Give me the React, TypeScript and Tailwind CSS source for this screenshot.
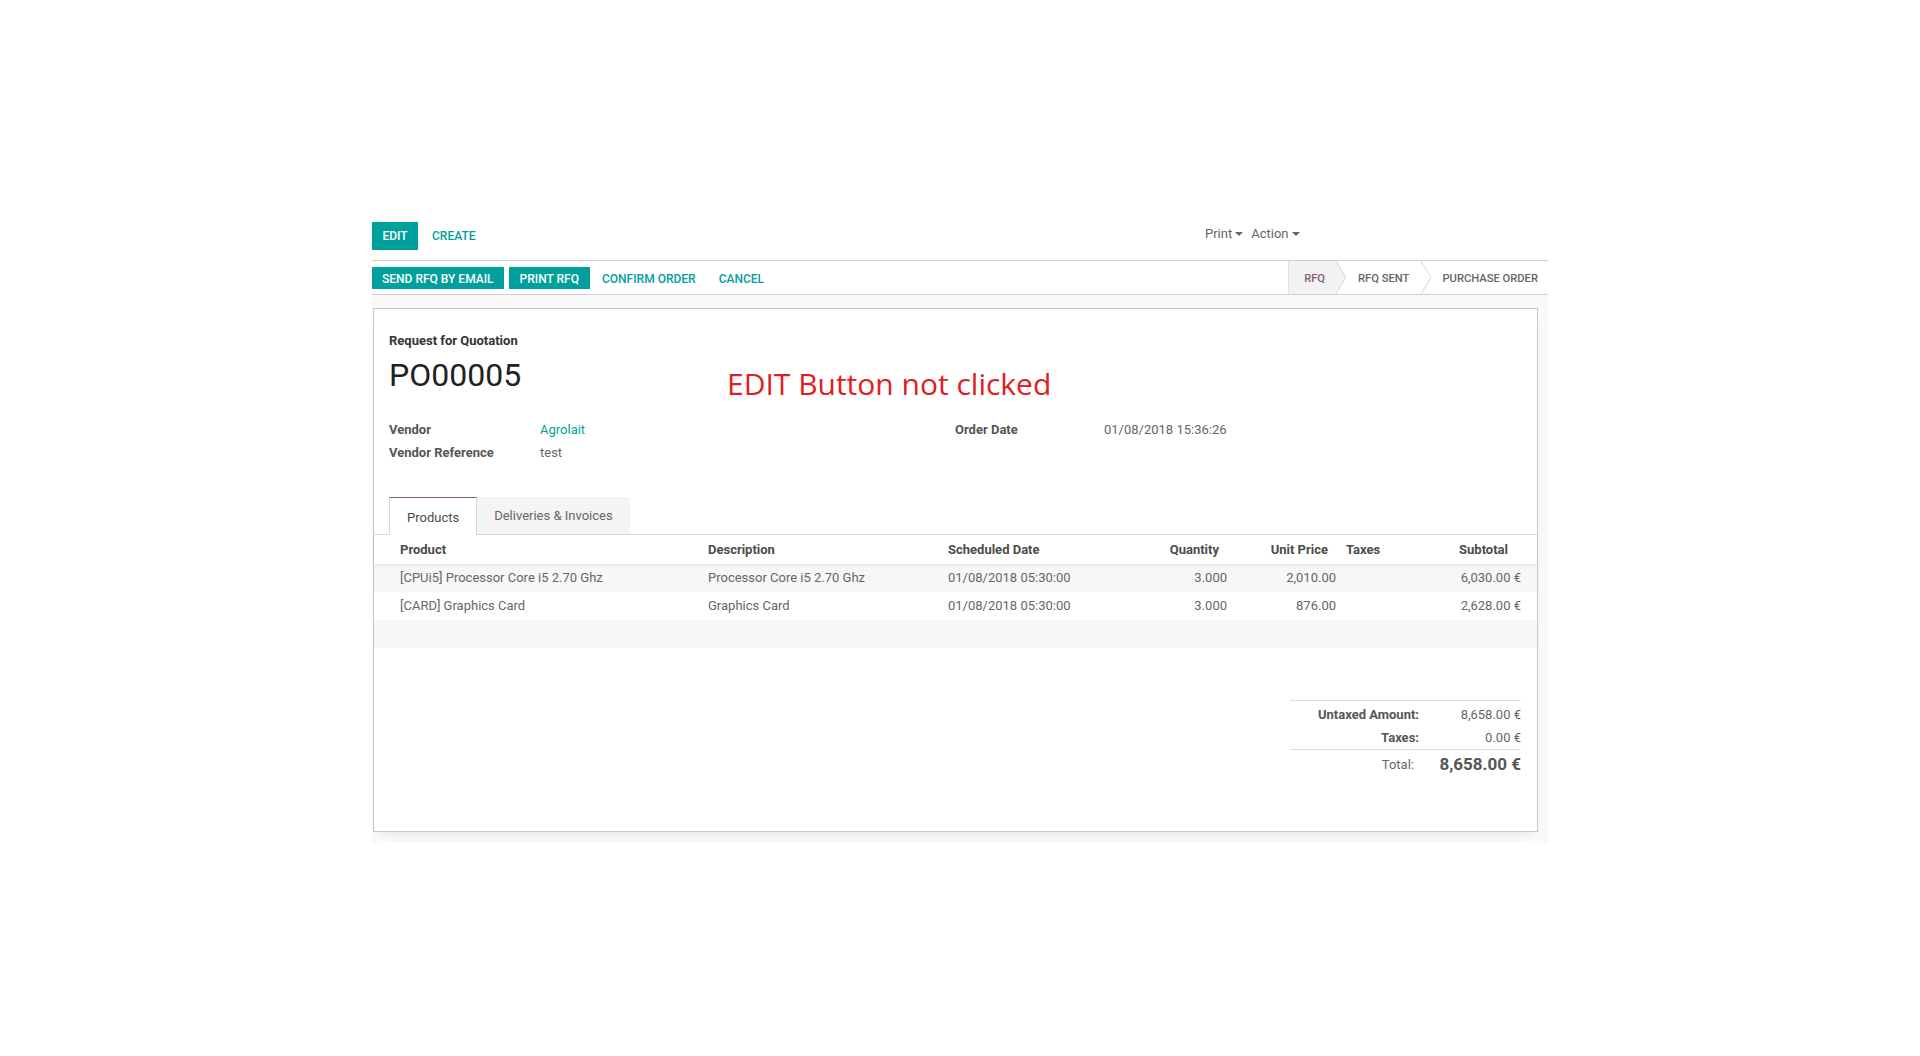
import React from "react";

function Caret() {
  return <span className="ml-[3px] inline-block h-0 w-0 border-x-[4px] border-t-[4px] border-x-transparent border-t-[#666]" />;
}

function Chevron({ fill }: { fill?: boolean }) {
  return (
    <svg width="10" height="33" viewBox="0 0 10 33" className="block shrink-0">
      {fill && <polygon points="0,0 0,33 10,16.5" fill="#f2f2f2" />}
      <polyline points="0,0 10,16.5 0,33" fill="none" stroke="#d6d6d6" strokeWidth="1" />
    </svg>
  );
}

const rows = [
  {
    product: "[CPUi5] Processor Core i5 2.70 Ghz",
    desc: "Processor Core i5 2.70 Ghz",
    date: "01/08/2018 05:30:00",
    qty: "3.000",
    price: "2,010.00",
    sub: "6,030.00 €",
  },
  {
    product: "[CARD] Graphics Card",
    desc: "Graphics Card",
    date: "01/08/2018 05:30:00",
    qty: "3.000",
    price: "876.00",
    sub: "2,628.00 €",
  },
];

const gridCols = "grid grid-cols-[334px_240px_152px_127px_109px_64px_121px_16px]";

export default function App() {
  return (
    <div className="min-h-[1056px] w-[1920px] bg-white font-['Roboto',sans-serif] text-[13px] text-[#4c4c4c]">
      <div className="w-[1548px] pl-[372px] pt-[222px]">
        {/* top row */}
        <div className="flex h-[28px] items-center">
          <div className="flex w-[588px] items-center">
            <button className="h-[28px] w-[46px] bg-[#00A09D] text-[12px] font-medium text-white">EDIT</button>
            <span className="ml-[14px] text-[12px] font-medium text-[#00A09D]">CREATE</span>
          </div>
          <div className="-mt-[4px] flex items-center pl-[245px] text-[13px] text-[#666]">
            <span className="flex items-center">Print<Caret /></span>
            <span className="ml-[8px] flex items-center">Action<Caret /></span>
          </div>
        </div>

        {/* status bar row */}
        <div className="mt-[10px] flex h-[35px] items-center justify-between border-y border-[#d0d0d0]">
          <div className="flex items-center text-[12px] font-medium">
            <button className="h-[22px] bg-[#00A09D] px-[10px] pt-[2px] text-white">SEND RFQ BY EMAIL</button>
            <button className="ml-[5px] h-[22px] bg-[#00A09D] px-[11px] pt-[2px] text-white">PRINT RFQ</button>
            <button className="ml-[2px] h-[22px] px-[10px] pt-[2px] text-[#00A09D]">CONFIRM ORDER</button>
            <button className="ml-[3px] h-[22px] px-[10px] pt-[2px] text-[#00A09D]">CANCEL</button>
          </div>
          <div className="flex h-[33px] items-center text-[11.2px] font-medium">
            <div className="flex h-full items-center border-l border-[#e0e0e0] bg-[#f2f2f2] pl-[15px] pr-[11px] pt-[3px] text-[#875A7B]">RFQ</div>
            <Chevron fill />
            <div className="pl-[12px] pr-[12px] pt-[3px] text-[#666]">RFQ SENT</div>
            <Chevron />
            <div className="pl-[11px] pr-[10px] pt-[3px] text-[#666]">PURCHASE ORDER</div>
          </div>
        </div>

        {/* content */}
        <div className="bg-[#f9f9f9] pb-[11px] pr-[10px] pt-[13px]">
          <div className="relative ml-px h-[524px] border border-[#c8c8c8] bg-white shadow-[0_6px_12px_-8px_rgba(0,0,0,0.15)]">
            <div className="absolute left-[353px] top-[55px] font-['Open_Sans',sans-serif] text-[30px] leading-[40px] text-[#e0201f]">
              EDIT Button not clicked
            </div>

            <div className="px-[15px] pt-[23px]">
              <div className="h-[18px] text-[13px] font-bold leading-[18px] text-[#333]">Request for Quotation</div>
              <div className="mt-[7px] h-[36px] text-[32px] leading-[36px] text-[#212121]">PO00005</div>

              <div className="mt-[25px] grid grid-cols-[566px_566px]">
                <div>
                  <div className="flex h-[23px] items-center">
                    <span className="w-[151px] font-bold text-[#555]">Vendor</span>
                    <span className="text-[#00A09D]">Agrolait</span>
                  </div>
                  <div className="flex h-[23px] items-center">
                    <span className="w-[151px] font-bold text-[#555]">Vendor Reference</span>
                    <span className="text-[#666]">test</span>
                  </div>
                </div>
                <div>
                  <div className="flex h-[23px] items-center">
                    <span className="w-[149px] font-bold text-[#555]">Order Date</span>
                    <span className="text-[#666]">01/08/2018 15:36:26</span>
                  </div>
                </div>
              </div>
            </div>

            {/* tabs */}
            <div className="mt-[33px] flex h-[38px] border-b border-[#d8d8d8] pl-[15px]">
              <div className="-mb-px flex h-[38px] items-center border-x border-t border-[#d8d8d8] border-t-[#875A7B] bg-white px-[17px] pt-[2px] text-[#4c4c4c]">
                Products
              </div>
              <div className="flex h-[37px] items-center bg-[#f4f4f4] px-[17px] text-[#666]">Deliveries &amp; Invoices</div>
            </div>

            {/* table */}
            <div className={`${gridCols} relative z-10 h-[29px] items-center pt-[1px] font-bold text-[#4c4c4c] shadow-[0_2px_3px_rgba(0,0,0,0.06)]`}>
              <div className="pl-[26px]">Product</div>
              <div>Description</div>
              <div>Scheduled Date</div>
              <div className="pr-[8px] text-right">Quantity</div>
              <div className="pr-[8px] text-right">Unit Price</div>
              <div className="pl-[10px]">Taxes</div>
              <div className="pr-[13px] text-right">Subtotal</div>
              <div />
            </div>
            {rows.map((r, i) => (
              <div key={i} className={`${gridCols} h-[28px] items-center text-[#666] ${i === 0 ? "bg-[#f7f7f7]" : "bg-white"}`}>
                <div className="pl-[26px]">{r.product}</div>
                <div>{r.desc}</div>
                <div>{r.date}</div>
                <div className="text-right">{r.qty}</div>
                <div className="text-right">{r.price}</div>
                <div />
                <div className="text-right">{r.sub}</div>
                <div />
              </div>
            ))}
            <div className="h-[28px] bg-[#f7f7f7]" />

            {/* totals */}
            <div className="mr-[16px] ml-auto mt-[52px] w-[231px] border-t border-[#dcdcdc]">
              <div className="flex h-[26px] items-center pt-[1px]">
                <div className="w-[129px] text-right font-bold text-[#555]">Untaxed Amount:</div>
                <div className="flex-1 text-right text-[#666]">8,658.00 €</div>
              </div>
              <div className="flex h-[23px] items-center border-b border-[#dcdcdc]">
                <div className="w-[129px] text-right font-bold text-[#555]">Taxes:</div>
                <div className="flex-1 text-right text-[#666]">0.00 €</div>
              </div>
              <div className="flex h-[28px] items-center pt-[1px]">
                <div className="w-[129px] pr-[5px] text-right text-[#666]">Total:</div>
                <div className="flex-1 text-right text-[17px] font-bold text-[#555]">8,658.00 €</div>
              </div>
            </div>
          </div>
        </div>
      </div>
    </div>
  );
}
